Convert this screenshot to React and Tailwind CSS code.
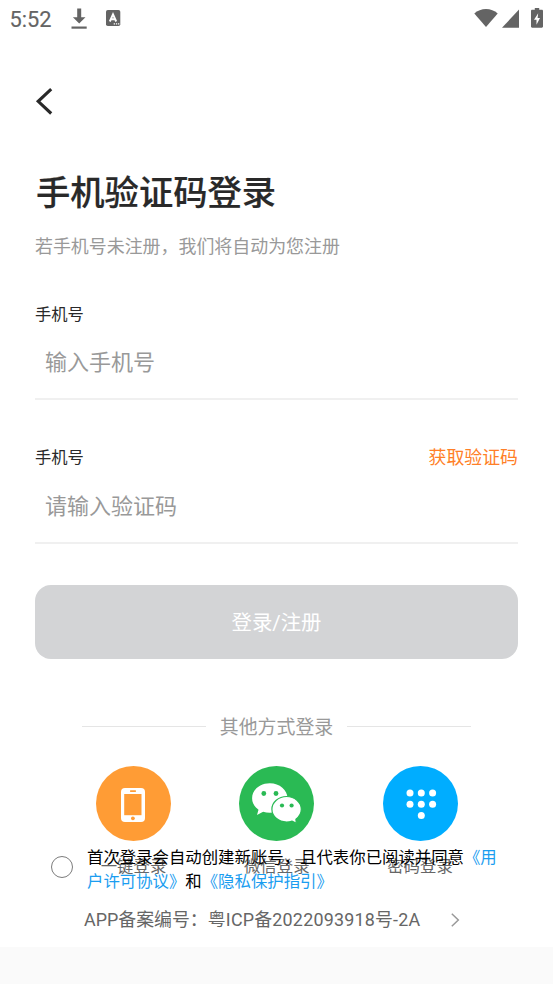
import { useState } from "react";

function StatusBar() {
  return (
    <div className="h-10 flex items-start justify-between pl-[9px] pr-[9px] text-[#646464]">
      <div className="flex items-start">
        <span className="w-[62px] pl-[0.500px] pt-[7px] text-[21.800px] leading-[25px] [-webkit-text-stroke:0.150px_#646464]">5:52</span>
        <svg className="mt-2 w-4 h-[21px]" viewBox="0 0 16 21" fill="currentColor">
          <path d="M6.200 0.500h4v8.700h4.300L8.200 15.400 1.900 9.200h4.300z" />
          <path d="M0.500 18.500h15.200v2.200H0.500z" />
        </svg>
        <svg className="ml-[19px] mt-[10px] w-[15px] h-4" viewBox="0 0 15 16">
          <rect width="14.300" height="16" rx="1.800" fill="currentColor" />
          <path
            d="M3.800 11.500L7 4.300l3.200 7.200M4.900 9.200h4.200"
            fill="none"
            stroke="#fff"
            strokeWidth="1.900"
          />
          <path d="M7.700 13.200h1.300v1.400H7.700zM9.900 13.200h1.300v1.400H9.900zM12 13.200h1.300v1.400H12z" fill="#fff" />
        </svg>
      </div>
      <div className="flex items-start">
        <svg className="mt-[9px] w-6 h-[18px]" viewBox="0 0 24 18" fill="currentColor">
          <path d="M0.300 4.400C3.500 1.600 7.500 0 12 0s8.500 1.600 11.700 4.400L12 18z" />
        </svg>
        <svg className="ml-1 mt-[9px] w-[18px] h-[19px]" viewBox="0 0 18 19" fill="currentColor">
          <path d="M17 0.600V18.700H0z" />
        </svg>
        <svg className="ml-[11px] mr-px mt-2 w-[12px] h-5" viewBox="0 0 12 20" fill="currentColor">
          <path d="M3.800 0h4.400v1.800h2.600c.7 0 1.200.5 1.200 1.200v15.500c0 .7-.5 1.200-1.200 1.200H1.200C.5 19.700 0 19.200 0 18.500V3c0-.7.5-1.200 1.200-1.200h2.600z" />
          <path d="M7.200 5.200L3 11.700h2.500v5.100L9 10.100H6.600z" fill="#fff" />
        </svg>
      </div>
    </div>
  );
}

function PhoneIcon() {
  return (
    <svg className="w-[75px] h-[75px]" viewBox="0 0 75 75">
      <circle cx="37.500" cy="37.500" r="37.500" fill="#ff9c35" />
      <rect x="25" y="22" width="24" height="34" rx="4" fill="#fff" />
      <path d="M28.200 28h17.300v21.200H28.200z" fill="#ff9c35" />
      <rect x="34" y="24.200" width="6" height="1.700" rx="0.600" fill="#ff9c35" />
      <circle cx="36.900" cy="52.300" r="1.900" fill="#ff9c35" />
    </svg>
  );
}

function WechatIcon() {
  return (
    <svg className="w-[75px] h-[75px]" viewBox="0 0 75 75">
      <circle cx="37.500" cy="37.500" r="37.500" fill="#2aba54" />
      <path
        d="M30.800 17.300c-9.900 0-17.700 6.600-17.700 15 0 4.700 2.400 8.700 6.400 11.400l-1.500 5.300 6.100-3.200c2.100.7 4.300 1 6.700 1 9.900 0 17.700-6.300 17.700-14.500s-7.800-15-17.700-15z"
        fill="#fff"
      />
      <path
        d="M47.600 30.500c8.100 0 14.700 5.700 14.700 12.800 0 4-2.100 7.500-5.400 9.900l.4 4.200-4.200-2.300c-1.700.6-3.500.9-5.500.9-8.100 0-14.700-5.700-14.700-12.700s6.600-12.800 14.700-12.800z"
        fill="#fff"
        stroke="#2aba54"
        strokeWidth="1.200"
      />
      <g fill="#2aba54">
        <circle cx="24.800" cy="27.500" r="2.400" />
        <circle cx="37" cy="27.500" r="2.400" />
        <circle cx="43" cy="39.500" r="2.100" />
        <circle cx="52.600" cy="39.500" r="2.100" />
      </g>
    </svg>
  );
}

function KeypadIcon() {
  const dots = [
    [27, 27],
    [38.3, 27],
    [49.6, 27],
    [27, 38.3],
    [38.3, 38.3],
    [49.6, 38.3],
    [38.3, 49.6],
  ];
  return (
    <svg className="w-[75px] h-[75px]" viewBox="0 0 75 75">
      <circle cx="37.500" cy="37.500" r="37.500" fill="#00adff" />
      {dots.map(([x, y]) => (
        <circle key={`${x}-${y}`} cx={x} cy={y} r="3.500" fill="#fff" />
      ))}
    </svg>
  );
}

const methods = [
  { name: "一键登录", Icon: PhoneIcon },
  { name: "微信登录", Icon: WechatIcon },
  { name: "密码登录", Icon: KeypadIcon },
];

export default function App() {
  const [phone, setPhone] = useState("");
  const [code, setCode] = useState("");
  const [agreed, setAgreed] = useState(false);

  return (
    <div
      lang="zh-CN"
      className="w-[553px] h-[984px] flex flex-col overflow-hidden bg-white font-[Roboto,'Noto_Sans_CJK_SC',sans-serif]"
    >
      <StatusBar />

      <div className="px-[35px] pt-12">
        <button className="block" aria-label="返回">
          <svg className="w-5 h-[27px]" viewBox="0 0 20 27" fill="none" stroke="#292929" strokeWidth="3.100">
            <path d="M16.200 1.200L3.200 13.300l13 12.200" />
          </svg>
        </button>

        <h1 className="mt-[53px] h-[51px] pl-px leading-[50px] text-[34.300px] font-medium text-[#292929] [-webkit-text-stroke:0.200px_#292929]">
          手机验证码登录
        </h1>
        <p className="mt-4 h-[24px] leading-[24px] text-[17.950px] text-[#999]">
          若手机号未注册，我们将自动为您注册
        </p>

        <div className="mt-11 h-6 leading-6 text-[16.300px] text-[#292929]">手机号</div>
        <input
          value={phone}
          onChange={(e) => setPhone(e.target.value)}
          placeholder="输入手机号"
          className="block w-full h-[73px] pl-[10px] border-b-2 border-[#f0f0f0] text-[22px] outline-none placeholder:text-[#999]"
        />

        <div className="mt-[46px] h-6 leading-6 flex justify-between text-[16.300px] text-[#292929]">
          <span>手机号</span>
          <button className="text-[17.900px] leading-6 text-[#ff7f27]">获取验证码</button>
        </div>
        <input
          value={code}
          onChange={(e) => setCode(e.target.value)}
          placeholder="请输入验证码"
          className="block w-full h-[74px] pt-px pl-[10px] border-b-2 border-[#f0f0f0] text-[22px] outline-none placeholder:text-[#999]"
        />

        <button className="mt-[41px] block w-full h-[73.500px] pt-[3px] rounded-[16px] bg-[#d3d4d6] text-[20.400px] text-white">
          登录/注册
        </button>
      </div>

      <div className="mt-[53.500px] mx-[82px] h-7 flex items-center gap-[14px]">
        <div className="flex-1 h-px bg-[#e5e5e5]" />
        <span className="pt-1 text-[18.900px] leading-7 text-[#999]">其他方式登录</span>
        <div className="flex-1 h-px bg-[#e5e5e5]" />
      </div>

      <div className="mt-[26px] ml-[62px] mr-[61.500px] flex justify-between">
        {methods.map(({ name, Icon }) => (
          <button key={name} className="w-[143px] flex flex-col items-center">
            <Icon />
            <span className="mt-[14px] h-6 leading-6 text-[16.400px] text-[#666]">{name}</span>
          </button>
        ))}
      </div>

      {/* agreement slides up over the method names */}
      <div className="relative -mt-[33px] pl-[51px] flex items-start">
        <button
          onClick={() => setAgreed(!agreed)}
          aria-label="同意"
          className={`mt-[10px] w-[22px] h-[22px] rounded-full border-[1.500px] border-[#7c7c7c] ${
            agreed ? "bg-[#ff9c35]" : ""
          }`}
        />
        <p className="ml-[14px] w-[420px] text-[16.400px] leading-6 text-black">
          首次登录会自动创建新账号，且代表你已阅读并同意
          <span className="text-[#1b9df0]">《用<br />户许可协议》</span>
          和
          <span className="text-[#1b9df0]">《隐私保护指引》</span>
        </p>
      </div>

      <div className="mt-[14px] pl-[84px] h-6 flex items-center">
        <span className="w-[366px] text-[17.900px] leading-6 text-[#666]">
          APP备案编号：<span className="tracking-[0.210px]">粤ICP备2022093918号-2A</span>
        </span>
        <svg className="w-[10px] h-[14px]" viewBox="0 0 10 14" fill="none" stroke="#999" strokeWidth="1.500">
          <path d="M1.800 0.800l6.500 6.200-6.500 6.200" />
        </svg>
      </div>

      <div className="mt-auto h-[37px] shrink-0 bg-[#fafafa]" />
    </div>
  );
}
